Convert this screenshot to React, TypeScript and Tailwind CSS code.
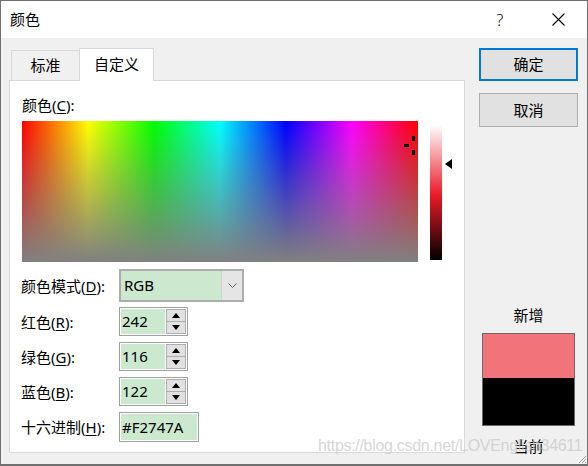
import React from "react";

const Spin = ({ value }: { value: string }) => (
  <div className="flex h-[29px] w-[69px] border border-[#a0a0a0] bg-white p-px">
    <div className="flex h-full w-[45px] items-center bg-[#cce8cf] pl-[1px] text-[15px] leading-none text-black">
      {value}
    </div>
    <div className="ml-px flex w-[20px] flex-col">
      <div className="flex h-[13px] items-center justify-center border border-[#adadad] bg-[#e1e1e1]">
        <svg width="8" height="5" viewBox="0 0 8 5">
          <polygon points="0,5 8,5 4,0" fill="#000" />
        </svg>
      </div>
      <div className="flex h-[13px] items-center justify-center border border-t-0 border-[#adadad] bg-[#e1e1e1]">
        <svg width="8" height="5" viewBox="0 0 8 5">
          <polygon points="0,0 8,0 4,5" fill="#000" />
        </svg>
      </div>
    </div>
  </div>
);

const Label = ({ pre, k }: { pre: string; k: string }) => (
  <div className="w-[98px] shrink-0 text-[15px] leading-[20px] text-black">
    {pre}(<span className="underline underline-offset-2">{k}</span>):
  </div>
);

export default function App() {
  return (
    <div className="relative h-[466px] w-[588px] overflow-hidden border border-b-2 border-[#707070] bg-[#f0f0f0] font-['Noto_Sans','Noto_Sans_CJK_SC',sans-serif] text-black">
      {/* title bar */}
      <div className="flex h-[37px] items-center justify-between bg-white pl-[9px] pr-[6px]">
        <div className="text-[15px] leading-none">颜色</div>
        <div className="flex items-center gap-[11px]">
          <div className="flex w-[46px] justify-center pr-[2px] text-[16px] font-light leading-none">?</div>
          <div className="flex w-[46px] justify-center">
            <svg width="13" height="13" viewBox="0 0 13 13">
              <path d="M0.5 0.5 L12.5 12.5 M12.5 0.5 L0.5 12.5" stroke="#000" strokeWidth="1.1" fill="none" />
            </svg>
          </div>
        </div>
      </div>

      {/* body */}
      <div className="flex pl-[8px] pt-[10px]">
        {/* left column */}
        <div className="w-[456px]">
          <div className="relative z-10 flex h-[33px]">
            <div className="ml-[2px] mt-[2px] flex h-[30px] w-[68px] items-center justify-center border-l border-t border-[#d9d9d9] bg-[#f0f0f0] text-[15px] leading-none">
              标准
            </div>
            <div className="flex h-[33px] w-[75px] items-center justify-center border border-b-0 border-[#d9d9d9] bg-white pb-[2px] text-[15px] leading-none">
              自定义
            </div>
          </div>
          <div className="relative -mt-px h-[373px] w-[456px] border border-[#d9d9d9] bg-white pl-[12px] pt-[14px]">
            <div className="h-[20px] text-[15px] leading-[20px]">
              颜色(<span className="underline underline-offset-2">C</span>):
            </div>
            <div className="mt-[6px] flex">
              <div className="relative h-[141px] w-[396px] overflow-hidden bg-[linear-gradient(to_bottom,rgba(128,128,128,0)_0%,#808080_100%),linear-gradient(to_right,#ff0000,#ffff00,#00ff00,#00ffff,#0000ff,#ff00ff,#ff0000)]">
                <div className="absolute left-[390px] top-[15px] h-[5px] w-[3px] bg-black" />
                <div className="absolute left-[390px] top-[29px] h-[5px] w-[3px] bg-black" />
                <div className="absolute left-[382px] top-[23px] h-[3px] w-[5px] bg-black" />
              </div>
              <div className="relative ml-[12px] mt-[4px] h-[135px] w-[12px] bg-[linear-gradient(to_bottom,#ffffff,#ea1a26_52%,#000000)]">
                <svg className="absolute left-[15px] top-[34px]" width="7" height="10" viewBox="0 0 7 10">
                  <polygon points="7,0 0,5 7,10" fill="#000" />
                </svg>
              </div>
            </div>

            {/* form */}
            <div className="-ml-px mt-[7px] flex flex-col">
              <div className="flex h-[33px] items-center">
                <Label pre="颜色模式" k="D" />
                <div className="flex h-[33px] w-[125px] border-2 border-[#adadad] bg-[#cce8cf]">
                  <div className="flex flex-1 items-center pl-[3px] text-[15px] leading-none">RGB</div>
                  <div className="flex w-[21px] items-center justify-center border-l border-[#d0d0d0] bg-[#e5e5e5]">
                    <svg width="9" height="5" viewBox="0 0 9 5">
                      <path d="M0.5 0.5 L4.5 4.5 L8.5 0.5" stroke="#606060" strokeWidth="1" fill="none" />
                    </svg>
                  </div>
                </div>
              </div>
              <div className="mt-[5px] flex h-[29px] items-center">
                <Label pre="红色" k="R" />
                <Spin value="242" />
              </div>
              <div className="mt-[6px] flex h-[29px] items-center">
                <Label pre="绿色" k="G" />
                <Spin value="116" />
              </div>
              <div className="mt-[6px] flex h-[29px] items-center">
                <Label pre="蓝色" k="B" />
                <Spin value="122" />
              </div>
              <div className="mt-[6px] flex h-[30px] items-center">
                <Label pre="十六进制" k="H" />
                <div className="h-[30px] w-[80px] border border-[#a0a0a0] bg-white p-px">
                  <div className="flex h-full items-center bg-[#cce8cf] pl-[1px] text-[15px] leading-none">#F2747A</div>
                </div>
              </div>
            </div>
          </div>
        </div>

        {/* right column */}
        <div className="ml-[14px] flex w-[99px] flex-col items-center">
          <div className="flex h-[33px] w-[99px] items-center justify-center border-2 border-[#0078d7] bg-[#e1e1e1] text-[15px] leading-none">
            确定
          </div>
          <div className="mt-[12px] flex h-[34px] w-[99px] items-center justify-center border border-[#adadad] bg-[#e1e1e1] text-[15px] leading-none">
            取消
          </div>
          <div className="mt-[178px] h-[20px] text-[15px] leading-[20px]">新增</div>
          <div className="mt-[8px] flex h-[93px] w-[93px] flex-col border border-[#696969]">
            <div className="h-[44px] bg-[#f2747a]" />
            <div className="flex-1 bg-black" />
          </div>
          <div className="mt-[10px] h-[20px] text-[15px] leading-[20px]">当前</div>
        </div>
      </div>

      {/* watermark */}
      <div className="pointer-events-none absolute left-[317px] top-[437px] z-20 whitespace-nowrap font-['Liberation_Sans',sans-serif] text-[16px] leading-[16px] tracking-[-0.3px] text-[rgba(200,200,200,0.75)]">
        https://blog.csdn.net/LOVEnglish34611
      </div>

      {/* resize grip */}
      <svg className="absolute bottom-0 right-0" width="10" height="10" viewBox="0 0 10 10">
        <path d="M9 2 L2 9 M9 5 L5 9 M9 8 L8 9" stroke="#a0a0a0" strokeWidth="1" fill="none" />
      </svg>
    </div>
  );
}
